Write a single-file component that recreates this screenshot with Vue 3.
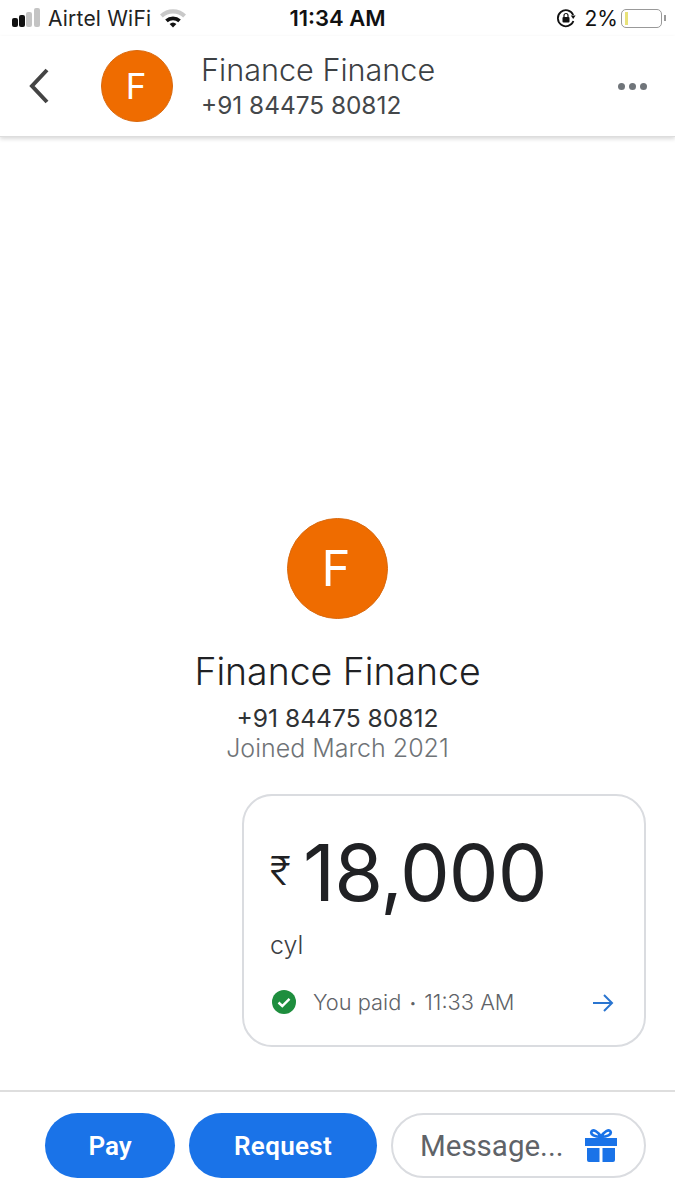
<script setup>
const phone = '+91 84475 80812'
</script>

<template>
  <div class="page">
    <div class="status">
      <div class="st-left">
        <svg class="signal" width="30" height="20" viewBox="0 0 30 20">
          <rect x="1" y="10" width="6" height="9" rx="2" fill="#111" />
          <rect x="8" y="7" width="6" height="12" rx="2" fill="#111" />
          <rect x="15" y="4" width="6" height="15" rx="2" fill="#c4c4c4" />
          <rect x="23" y="0" width="6" height="19" rx="2" fill="#c4c4c4" />
        </svg>
        <span class="carrier">Airtel WiFi</span>
        <svg class="wifi" width="28" height="20" viewBox="0 0 28 20">
          <path d="M1 6.5 A19 19 0 0 1 27 6.5 L24.2 9.5 A15 15 0 0 0 3.8 9.5 Z" fill="#c9c9c9" />
          <path d="M6.2 11.6 A11.5 11.5 0 0 1 21.8 11.6 L19.3 14.2 A8 8 0 0 0 8.7 14.2 Z" fill="#111" />
          <path d="M10.6 16 A5 5 0 0 1 17.4 16 L14 19.6 Z" fill="#111" />
        </svg>
      </div>
      <span class="time">11:34 AM</span>
      <div class="st-right">
        <svg width="20" height="20" viewBox="0 0 20 20">
          <path d="M17.2 7 A8 8 0 1 0 17.4 13" fill="none" stroke="#111" stroke-width="1.8" />
          <path d="M14.8 7.5 L19.6 7.5 L17.2 11 Z" fill="#111" />
          <rect x="6.5" y="9" width="7" height="5.5" rx="1" fill="#111" />
          <path d="M8 9 V7.5 A2 2 0 0 1 12 7.5 V9" fill="none" stroke="#111" stroke-width="1.2" />
        </svg>
        <span class="pct">2%</span>
        <div class="battery"><i class="level"></i></div>
        <i class="nub"></i>
      </div>
    </div>

    <header class="bar">
      <svg class="back" width="24" height="36" viewBox="0 0 24 36">
        <path d="M20 2 L5 18 L20 34" fill="none" stroke="#444" stroke-width="4" />
      </svg>
      <div class="avatar small">F</div>
      <div class="who">
        <div class="who-name">Finance Finance</div>
        <div class="who-phone">{{ phone }}</div>
      </div>
      <div class="dots"><i></i><i></i><i></i></div>
    </header>

    <main class="chat">
      <div class="avatar large">F</div>
      <div class="name">Finance Finance</div>
      <div class="phone">{{ phone }}</div>
      <div class="joined">Joined March 2021</div>

      <div class="card">
        <div class="amount"><span class="rupee">₹</span><span class="value">18,000</span></div>
        <div class="note">cyl</div>
        <div class="foot">
          <svg width="26" height="26" viewBox="0 0 26 26">
            <circle cx="13" cy="13" r="12" fill="#1e8e3e" />
            <path d="M7.5 13.5 L11.3 17 L18.5 9.8" fill="none" stroke="#fff" stroke-width="2.4" />
          </svg>
          <span class="paid">You paid <span class="sep">•</span> 11:33 AM</span>
          <svg class="arrow" width="22" height="20" viewBox="0 0 22 20">
            <path d="M1 10 H20 M12 2 L20 10 L12 18" fill="none" stroke="#2a75d0" stroke-width="2" />
          </svg>
        </div>
      </div>
    </main>

    <footer class="actions">
      <button class="btn pay">Pay</button>
      <button class="btn request">Request</button>
      <div class="message">
        <span>Message...</span>
        <svg width="34" height="35" viewBox="0 0 34 35">
          <path d="M1 10 H33 V18 H1 Z M3 20 H15.5 V34 H5 A2 2 0 0 1 3 32 Z M18.5 20 H31 V32 A2 2 0 0 1 29 34 H18.5 Z" fill="#1a73e8" />
          <path d="M17 9 C14 3 9 1 7.5 3.5 C6 6.5 11 9 17 9 C23 9 28 6.5 26.5 3.5 C25 1 20 3 17 9 Z" fill="none" stroke="#1a73e8" stroke-width="2.6" />
        </svg>
      </div>
    </footer>
  </div>
</template>

<style scoped>
.page {
  width: 675px;
  height: 1200px;
  background: #fff;
  display: flex;
  flex-direction: column;
  font-family: Inter, "Noto Sans", sans-serif;
  overflow: hidden;
}
.status {
  height: 36px;
  display: grid;
  grid-template-columns: 1fr auto 1fr;
  align-items: center;
  padding: 0 9px 0 11px;
  color: #111;
  font-size: 21px;
}
.st-left { display: flex; align-items: center; gap: 7px; }
.signal { margin-top: -1px; }
.carrier { font-family: Inter, sans-serif; letter-spacing: 0.2px; color: #222; }
.wifi { margin-left: 1px; }
.time { font-weight: 600; font-size: 22px; margin-right: 2px; }
.st-right { display: flex; align-items: center; justify-content: flex-end; gap: 6px; }
.pct { font-size: 21px; margin-left: 3px; }
.battery {
  width: 41px;
  height: 19px;
  border: 1.5px solid #999;
  border-radius: 5px;
  margin-left: -3px;
  padding: 2px 3px;
  box-sizing: border-box;
  display: flex;
}
.level { width: 3px; background: #e8e27a; }
.nub { width: 2px; height: 6px; background: #999; margin-left: -4px; }

.bar {
  height: 101px;
  display: flex;
  align-items: center;
  padding: 0 28px 0 27px;
  box-sizing: border-box;
  border-bottom: 1px solid #ddd;
  box-shadow: 0 2px 4px rgba(0, 0, 0, 0.15);
  position: relative;
}
.back { flex: none; }
.avatar {
  border-radius: 50%;
  background: #ef6c00;
  color: #fff;
  display: flex;
  align-items: center;
  justify-content: center;
  box-sizing: border-box;
  border: 1px solid #d9690e;
  flex: none;
}
.avatar.small { width: 72px; height: 72px; font-size: 35px; margin-left: 50px; padding-right: 2px; }
.avatar.large { width: 101px; height: 101px; font-size: 49px; padding-right: 3px; }
.who { margin-left: 28px; flex: 1; margin-top: -1px; }
.who-name { font-size: 30.6px; line-height: 38px; color: #3c4043; font-weight: 300; }
.who-phone { font-size: 24.4px; line-height: 32px; color: #44474a; }
.dots { display: flex; gap: 4px; }
.dots i { width: 7px; height: 7px; border-radius: 50%; background: #70757a; }

.chat {
  flex: 1;
  display: flex;
  flex-direction: column;
  align-items: center;
  padding-top: 381px;
}
.name { margin-top: 30px; font-size: 37.4px; line-height: 46px; color: #202124; font-weight: 300; }
.phone { margin-top: 9px; font-size: 24.6px; line-height: 28px; color: #2f3235; font-weight: 400; }
.joined { margin-top: 0; font-size: 25px; line-height: 32px; color: #6f7377; font-weight: 300; }
.card {
  align-self: flex-end;
  width: 404px;
  height: 253px;
  margin: 30px 29px 0 0;
  box-sizing: border-box;
  border: 2px solid #dadce0;
  border-radius: 30px;
  padding: 31px 30px 0 26px;
}
.amount { display: flex; align-items: flex-start; color: #202124; }
.rupee { font-size: 40px; line-height: 48px; margin-top: 20px; width: 33px; font-weight: 300; }
.value { font-size: 79px; line-height: 90px; letter-spacing: -1px; font-weight: 400; }
.note { margin-top: 13px; font-size: 25px; line-height: 30px; color: #3c4043; font-weight: 300; }
.foot { margin-top: 29px; display: flex; align-items: center; padding-left: 1px; }
.paid { margin-left: 16px; flex: 1; font-size: 21.8px; color: #5f6368; font-weight: 300; }
.sep { font-size: 12px; vertical-align: 3px; margin: 0 2px; }
.arrow { margin-top: 2px; }

.actions {
  height: 110px;
  flex: none;
  box-sizing: border-box;
  border-top: 2px solid #dedede;
  padding: 21px 29px 0 45px;
  display: flex;
  gap: 14px;
  align-items: flex-start;
}
.btn {
  height: 65px;
  border: 0;
  border-radius: 33px;
  background: #1a73e8;
  color: #fff;
  font: 600 26px Roboto, sans-serif;
}
.pay { width: 130px; }
.request { width: 188px; letter-spacing: 0.3px; }
.message {
  flex: 1;
  height: 65px;
  box-sizing: border-box;
  border: 2px solid #dadce0;
  border-radius: 33px;
  display: flex;
  align-items: center;
  justify-content: space-between;
  padding: 0 26px 0 27px;
  font: 400 29.5px Roboto, sans-serif;
  color: #5f6368;
}
</style>
